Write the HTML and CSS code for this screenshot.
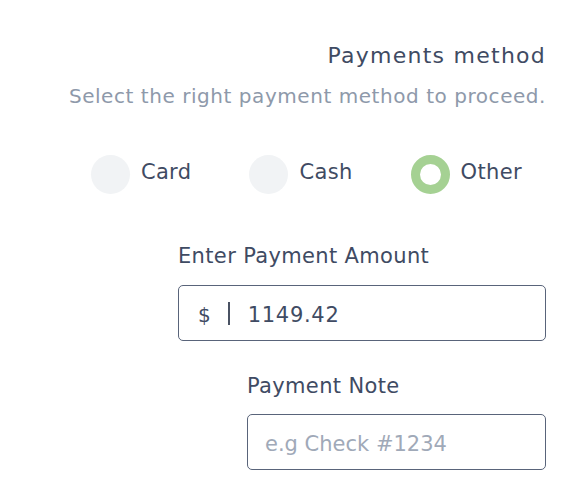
FILE: index.html
```html
<!DOCTYPE html>
<html>
<head>
<meta charset="utf-8">
<link rel="stylesheet" href="styles.css">
</head>
<body>
<div class="page">
  <h1 class="title">Payments method</h1>
  <p class="subtitle">Select the right payment method to proceed.</p>
  <div class="methods">
    <label class="method"><span class="radio"></span><span class="method-label">Card</span></label>
    <label class="method"><span class="radio"></span><span class="method-label">Cash</span></label>
    <label class="method"><span class="radio radio-on"></span><span class="method-label">Other</span></label>
  </div>
  <div class="field field-amount">
    <div class="field-label">Enter Payment Amount</div>
    <div class="input">
      <span class="currency">$</span><span class="sep"></span><span class="value">1149.42</span>
    </div>
  </div>
  <div class="field field-note">
    <div class="field-label">Payment Note</div>
    <div class="input">
      <span class="placeholder">e.g Check #1234</span>
    </div>
  </div>
</div>
</body>
</html>
```

FILE: styles.css
```css
* { box-sizing: border-box; }
html, body { margin: 0; padding: 0; background: #ffffff; }
body { font-family: "DejaVu Sans", "Open Sans", sans-serif; color: #3f4b63; }

.page {
  width: 566px;
  padding: 41px 20px 0 0;
  display: flex;
  flex-direction: column;
  align-items: flex-end;
}

.title {
  margin: 0;
  font-size: 22px;
  line-height: 30px;
  font-weight: 400;
  letter-spacing: 1.25px;
  color: #3f4b63;
  text-align: right;
}

.subtitle {
  margin: 11px 0 0;
  font-size: 20px;
  line-height: 28px;
  letter-spacing: 0.55px;
  color: #8e99aa;
  text-align: right;
}

.methods {
  margin-top: 44px;
  display: flex;
  gap: 58px;
  padding-right: 24px;
  height: 40px;
  align-items: center;
}

.method {
  display: flex;
  align-items: center;
  gap: 11px;
}

.radio {
  width: 39px;
  height: 39px;
  border-radius: 50%;
  background: #f1f3f5;
}

.radio-on {
  background: #ffffff;
  border: 9px solid #a5d193;
}

.method-label {
  font-size: 21px;
  line-height: 28px;
  letter-spacing: 0.35px;
  margin-bottom: 5px;
  color: #3f4b63;
}

.field { display: flex; flex-direction: column; }
.field-amount { width: 368px; margin-top: 48px; }
.field-note { width: 299px; margin-top: 31px; }

.field-label {
  font-size: 21px;
  line-height: 28px;
  letter-spacing: 0.35px;
  color: #3f4b63;
}

.input {
  margin-top: 15px;
  height: 56px;
  border: 1px solid #59647a;
  border-radius: 5px;
  display: flex;
  align-items: center;
  padding: 3px 0 0 19px;
  font-size: 21px;
}
.field-note .input { margin-top: 14px; padding-left: 17px; }

.currency { font-size: 20px; color: #3f4b63; }
.sep {
  width: 2px;
  height: 23px;
  margin: -3px 0 0 17px;
  background: #4a5263;
}
.value { margin-left: 18px; letter-spacing: 0.7px; color: #3f4b63; }
.placeholder { color: #a0a9b8; font-size: 21px; }
```
